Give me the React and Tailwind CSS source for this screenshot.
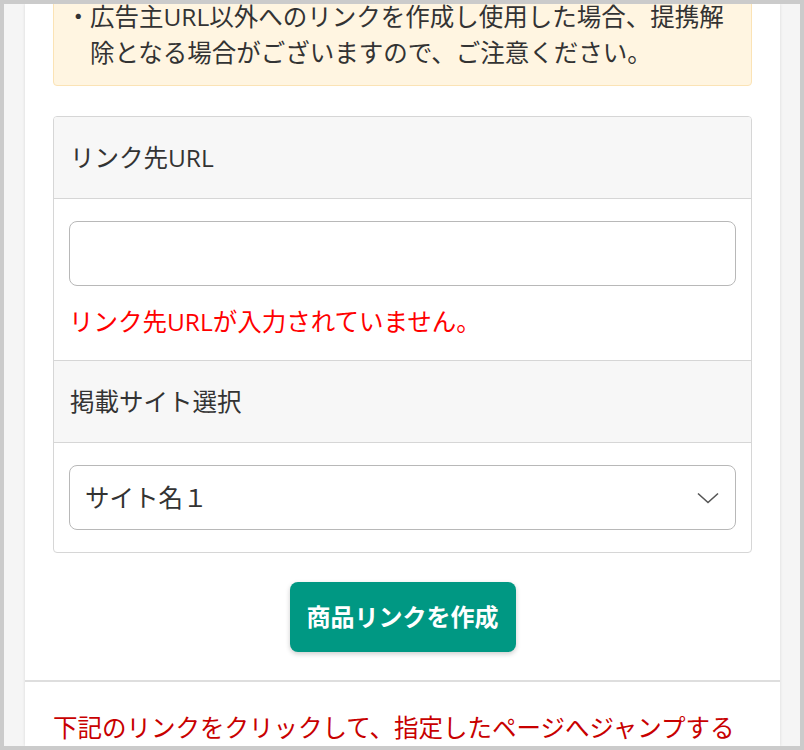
import React from "react";

const font = { fontFamily: '"Open Sans", "Noto Sans CJK JP", sans-serif' };

export default function App() {
  return (
    <div
      className="w-[804px] h-[750px] border-4 border-[#cbcbcb] bg-[#f5f5f5] overflow-hidden box-border text-[#333333]"
      style={font}
    >
      <div className="ml-[21px] mr-[20px] h-full flex flex-col bg-white shadow-[0_0_3px_rgba(0,0,0,0.12)]">
        <div className="px-[28px] pb-[28px]">
          <div className="-mt-[20px] border border-[#fbe3b5] bg-[#fff5e1] rounded-[4px] px-[12px] py-[14px] text-[24.5px] leading-[36px]">
            <div className="flex">
              <span className="w-[24px] shrink-0 text-center">・</span>
              <span>
                広告主URL以外へのリンクを作成し使用した場合、提携解
                <br />
                除となる場合がございますので、ご注意ください。
              </span>
            </div>
          </div>

          <div className="mt-[30px] border border-[#d6d6d6] rounded-[4px] overflow-hidden">
            <div className="bg-[#f7f7f7] px-[16px] pt-[23px] pb-[22px] border-b border-[#d6d6d6] text-[24.5px] leading-[36px]">
              リンク先URL
            </div>
            <div className="px-[15px] pt-[22px] pb-[20px] border-b border-[#d6d6d6]">
              <input
                type="text"
                className="block w-full h-[65px] border border-[#b8b8b8] rounded-[8px] bg-white outline-none px-[16px] text-[24px]"
              />
              <div className="mt-[18px] text-[24.5px] leading-[36px] text-[#ff0000]">
                リンク先URLが入力されていません。
              </div>
            </div>
            <div className="bg-[#f7f7f7] px-[16px] pt-[23px] pb-[22px] border-b border-[#d6d6d6] text-[24.5px] leading-[36px]">
              掲載サイト選択
            </div>
            <div className="px-[15px] pt-[22px] pb-[22px]">
              <div className="flex items-center justify-between h-[65px] border border-[#b8b8b8] rounded-[8px] bg-white pl-[15px] pr-[16px] text-[24.5px] leading-[36px]">
                <span>サイト名１</span>
                <svg width="22" height="12" viewBox="0 0 22 12" fill="none">
                  <path d="M1 1.5 L11 10.5 L21 1.5" stroke="#555555" strokeWidth="1.6" />
                </svg>
              </div>
            </div>
          </div>

          <div className="mt-[29px] flex justify-center">
            <button className="w-[226px] h-[70px] rounded-[8px] bg-[#009883] text-white font-bold text-[24px] leading-[36px] shadow-[0_2px_5px_rgba(0,0,0,0.2)]">
              商品リンクを作成
            </button>
          </div>
        </div>

        <div className="border-t-2 border-[#dedede] px-[28px] pt-[28px] text-[24.5px] leading-[36px] text-[#c80000]">
          下記のリンクをクリックして、指定したページへジャンプする
        </div>
      </div>
    </div>
  );
}
